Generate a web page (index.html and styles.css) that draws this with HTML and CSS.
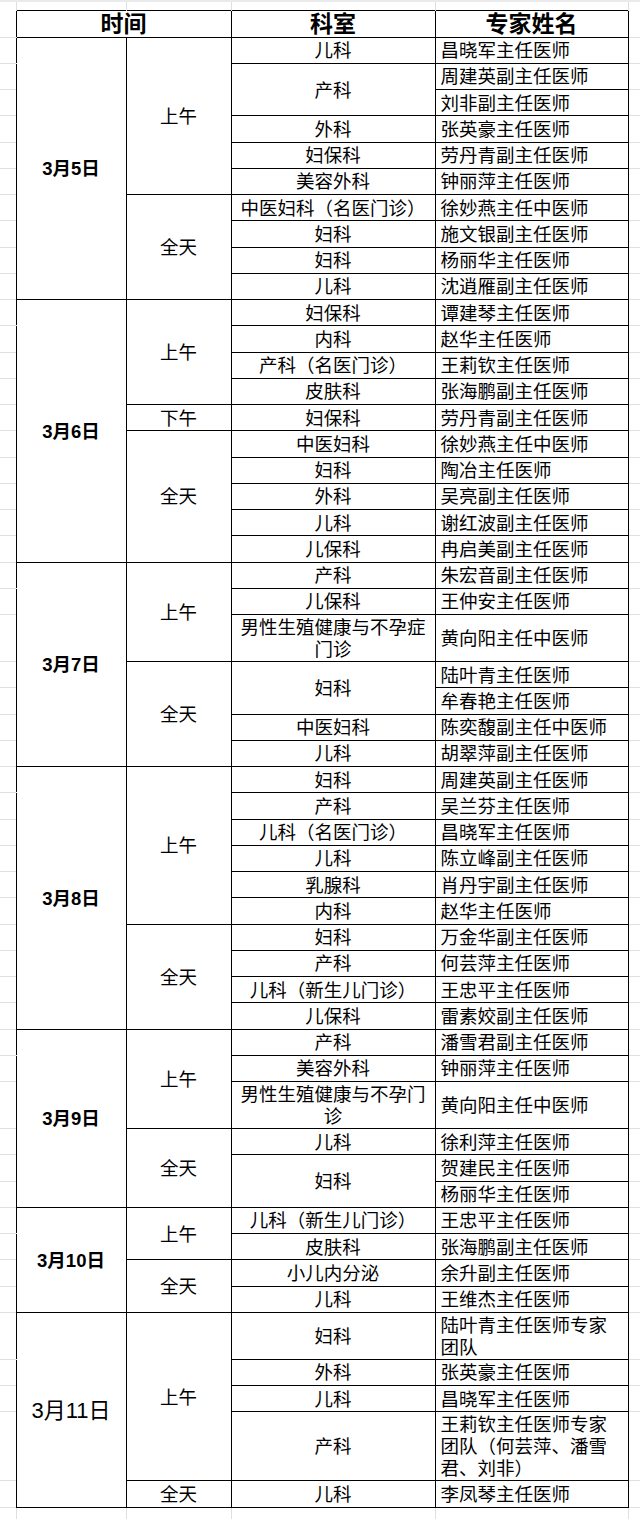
FILE: index.html
```html
<!DOCTYPE html>
<html lang="zh-CN">
<head>
<meta charset="utf-8">
<title>专家门诊排班表</title>
<link rel="stylesheet" href="styles.css">
</head>
<body>
<table class="sheet">
  <colgroup>
    <col class="c-gl"><col class="c-date"><col class="c-per"><col class="c-dept"><col class="c-doc"><col class="c-gr">
  </colgroup>
  <tbody>
    <tr class="top"><td class="t"></td><td class="t"></td><td class="t"></td><td class="t"></td><td class="t"></td><td class="t"></td></tr>
    <tr class="head"><td class="g"></td><th colspan="2">时间</th><th>科室</th><th>专家姓名</th><td class="g"></td></tr>

    <!-- 3月5日 -->
    <tr class="r1"><td class="g"></td><td class="date" rowspan="10">3月5日</td><td class="per" rowspan="6">上午</td><td>儿科</td><td class="doc">昌晓军主任医师</td><td class="g"></td></tr>
    <tr class="r1"><td class="g"></td><td rowspan="2">产科</td><td class="doc">周建英副主任医师</td><td class="g"></td></tr>
    <tr class="r1"><td class="g"></td><td class="doc">刘非副主任医师</td><td class="g"></td></tr>
    <tr class="r1"><td class="g"></td><td>外科</td><td class="doc">张英豪主任医师</td><td class="g"></td></tr>
    <tr class="r1"><td class="g"></td><td>妇保科</td><td class="doc">劳丹青副主任医师</td><td class="g"></td></tr>
    <tr class="r1"><td class="g"></td><td>美容外科</td><td class="doc">钟丽萍主任医师</td><td class="g"></td></tr>
    <tr class="r1"><td class="g"></td><td class="per" rowspan="4">全天</td><td>中医妇科（名医门诊）</td><td class="doc">徐妙燕主任中医师</td><td class="g"></td></tr>
    <tr class="r1"><td class="g"></td><td>妇科</td><td class="doc">施文银副主任医师</td><td class="g"></td></tr>
    <tr class="r1"><td class="g"></td><td>妇科</td><td class="doc">杨丽华主任医师</td><td class="g"></td></tr>
    <tr class="r1"><td class="g"></td><td>儿科</td><td class="doc">沈逍雁副主任医师</td><td class="g"></td></tr>

    <!-- 3月6日 -->
    <tr class="r1"><td class="g"></td><td class="date" rowspan="10">3月6日</td><td class="per" rowspan="4">上午</td><td>妇保科</td><td class="doc">谭建琴主任医师</td><td class="g"></td></tr>
    <tr class="r1"><td class="g"></td><td>内科</td><td class="doc">赵华主任医师</td><td class="g"></td></tr>
    <tr class="r1"><td class="g"></td><td>产科（名医门诊）</td><td class="doc">王莉钦主任医师</td><td class="g"></td></tr>
    <tr class="r1"><td class="g"></td><td>皮肤科</td><td class="doc">张海鹏副主任医师</td><td class="g"></td></tr>
    <tr class="r1"><td class="g"></td><td class="per">下午</td><td>妇保科</td><td class="doc">劳丹青副主任医师</td><td class="g"></td></tr>
    <tr class="r1"><td class="g"></td><td class="per" rowspan="5">全天</td><td>中医妇科</td><td class="doc">徐妙燕主任中医师</td><td class="g"></td></tr>
    <tr class="r1"><td class="g"></td><td>妇科</td><td class="doc">陶冶主任医师</td><td class="g"></td></tr>
    <tr class="r1"><td class="g"></td><td>外科</td><td class="doc">吴亮副主任医师</td><td class="g"></td></tr>
    <tr class="r1"><td class="g"></td><td>儿科</td><td class="doc">谢红波副主任医师</td><td class="g"></td></tr>
    <tr class="r1"><td class="g"></td><td>儿保科</td><td class="doc">冉启美副主任医师</td><td class="g"></td></tr>

    <!-- 3月7日 -->
    <tr class="r1"><td class="g"></td><td class="date" rowspan="7">3月7日</td><td class="per" rowspan="3">上午</td><td>产科</td><td class="doc">朱宏音副主任医师</td><td class="g"></td></tr>
    <tr class="r1"><td class="g"></td><td>儿保科</td><td class="doc">王仲安主任医师</td><td class="g"></td></tr>
    <tr class="r2"><td class="g"></td><td>男性生殖健康与不孕症<br>门诊</td><td class="doc">黄向阳主任中医师</td><td class="g"></td></tr>
    <tr class="r1"><td class="g"></td><td class="per" rowspan="4">全天</td><td rowspan="2">妇科</td><td class="doc">陆叶青主任医师</td><td class="g"></td></tr>
    <tr class="r1"><td class="g"></td><td class="doc">牟春艳主任医师</td><td class="g"></td></tr>
    <tr class="r1"><td class="g"></td><td>中医妇科</td><td class="doc">陈奕馥副主任中医师</td><td class="g"></td></tr>
    <tr class="r1"><td class="g"></td><td>儿科</td><td class="doc">胡翠萍副主任医师</td><td class="g"></td></tr>

    <!-- 3月8日 -->
    <tr class="r1"><td class="g"></td><td class="date" rowspan="10">3月8日</td><td class="per" rowspan="6">上午</td><td>妇科</td><td class="doc">周建英副主任医师</td><td class="g"></td></tr>
    <tr class="r1"><td class="g"></td><td>产科</td><td class="doc">吴兰芬主任医师</td><td class="g"></td></tr>
    <tr class="r1"><td class="g"></td><td>儿科（名医门诊）</td><td class="doc">昌晓军主任医师</td><td class="g"></td></tr>
    <tr class="r1"><td class="g"></td><td>儿科</td><td class="doc">陈立峰副主任医师</td><td class="g"></td></tr>
    <tr class="r1"><td class="g"></td><td>乳腺科</td><td class="doc">肖丹宇副主任医师</td><td class="g"></td></tr>
    <tr class="r1"><td class="g"></td><td>内科</td><td class="doc">赵华主任医师</td><td class="g"></td></tr>
    <tr class="r1"><td class="g"></td><td class="per" rowspan="4">全天</td><td>妇科</td><td class="doc">万金华副主任医师</td><td class="g"></td></tr>
    <tr class="r1"><td class="g"></td><td>产科</td><td class="doc">何芸萍主任医师</td><td class="g"></td></tr>
    <tr class="r1"><td class="g"></td><td>儿科（新生儿门诊）</td><td class="doc">王忠平主任医师</td><td class="g"></td></tr>
    <tr class="r1"><td class="g"></td><td>儿保科</td><td class="doc">雷素姣副主任医师</td><td class="g"></td></tr>

    <!-- 3月9日 -->
    <tr class="r1"><td class="g"></td><td class="date" rowspan="6">3月9日</td><td class="per" rowspan="3">上午</td><td>产科</td><td class="doc">潘雪君副主任医师</td><td class="g"></td></tr>
    <tr class="r1"><td class="g"></td><td>美容外科</td><td class="doc">钟丽萍主任医师</td><td class="g"></td></tr>
    <tr class="r2"><td class="g"></td><td>男性生殖健康与不孕门<br>诊</td><td class="doc">黄向阳主任中医师</td><td class="g"></td></tr>
    <tr class="r1"><td class="g"></td><td class="per" rowspan="3">全天</td><td>儿科</td><td class="doc">徐利萍主任医师</td><td class="g"></td></tr>
    <tr class="r1"><td class="g"></td><td rowspan="2">妇科</td><td class="doc">贺建民主任医师</td><td class="g"></td></tr>
    <tr class="r1"><td class="g"></td><td class="doc">杨丽华主任医师</td><td class="g"></td></tr>

    <!-- 3月10日 -->
    <tr class="r1"><td class="g"></td><td class="date" rowspan="4">3月10日</td><td class="per" rowspan="2">上午</td><td>儿科（新生儿门诊）</td><td class="doc">王忠平主任医师</td><td class="g"></td></tr>
    <tr class="r1"><td class="g"></td><td>皮肤科</td><td class="doc">张海鹏副主任医师</td><td class="g"></td></tr>
    <tr class="r1"><td class="g"></td><td class="per" rowspan="2">全天</td><td>小儿内分泌</td><td class="doc">余升副主任医师</td><td class="g"></td></tr>
    <tr class="r1"><td class="g"></td><td>儿科</td><td class="doc">王维杰主任医师</td><td class="g"></td></tr>

    <!-- 3月11日 -->
    <tr class="r2"><td class="g"></td><td class="date big" rowspan="5">3月11日</td><td class="per" rowspan="4">上午</td><td>妇科</td><td class="doc">陆叶青主任医师专家<br>团队</td><td class="g"></td></tr>
    <tr class="r1"><td class="g"></td><td>外科</td><td class="doc">张英豪主任医师</td><td class="g"></td></tr>
    <tr class="r1"><td class="g"></td><td>儿科</td><td class="doc">昌晓军主任医师</td><td class="g"></td></tr>
    <tr class="r3"><td class="g"></td><td>产科</td><td class="doc">王莉钦主任医师专家<br>团队（何芸萍、潘雪<br>君、刘非）</td><td class="g"></td></tr>
    <tr class="r1"><td class="g"></td><td class="per">全天</td><td>儿科</td><td class="doc">李凤琴主任医师</td><td class="g"></td></tr>

    <tr class="bottom"><td class="b"></td><td class="b"></td><td class="b"></td><td class="b"></td><td class="b"></td><td class="b"></td></tr>
  </tbody>
</table>
</body>
</html>
```

FILE: styles.css
```css
html, body {
  margin: 0;
  padding: 0;
  background: #ffffff;
}

body {
  font-family: "Liberation Sans", "Noto Sans CJK SC", sans-serif;
  color: #000;
}

.sheet {
  border-collapse: collapse;
  table-layout: fixed;
  width: 640px;
}

.c-gl { width: 16px; }
.c-date { width: 110px; }
.c-per { width: 105px; }
.c-dept { width: 204px; }
.c-doc { width: 193px; }
.c-gr { width: 12px; }

.sheet td,
.sheet th {
  border: 1px solid #000;
  padding: 2px 4px 0;
  font-size: 18.5px;
  line-height: 22px;
  font-weight: 400;
  text-align: center;
  vertical-align: middle;
  white-space: nowrap;
}

.sheet th {
  font-size: 23px;
  font-weight: 700;
  line-height: 25px;
  padding: 1px 4px 0;
}

.top { height: 9px; }
.head { height: 27px; }
.r1 { height: 26.25px; }
.r2 { height: 47px; }
.r3 { height: 69px; }
.bottom { height: 13px; }

.sheet td.g {
  border: none;
  border-bottom: 1px solid #dcdfe4;
  padding: 0;
}

.sheet td.t {
  border: none;
  border-top: 2px solid #e9eaec;
  border-right: 1px solid #dcdfe4;
  padding: 0;
}

.sheet td.b {
  border: none;
  border-right: 1px solid #dcdfe4;
  padding: 0;
}

.sheet td.doc {
  text-align: left;
  padding-left: 5px;
}

.sheet td.date {
  font-weight: 700;
  font-size: 18.5px;
}

.sheet td.date.big {
  font-weight: 400;
  font-size: 22px;
}
```
